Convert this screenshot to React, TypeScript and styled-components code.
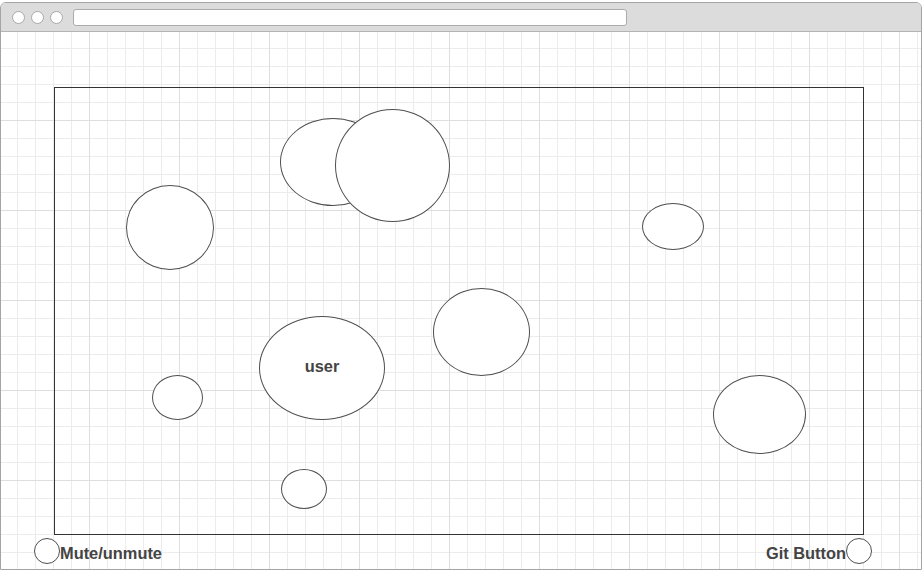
import React from 'react';
import styled, { createGlobalStyle } from 'styled-components';

const GlobalStyle = createGlobalStyle`
  html, body {
    margin: 0;
    padding: 0;
    background: #ffffff;
  }
  body {
    font-family: "Liberation Sans", Arial, sans-serif;
  }
`;

const Window = styled.div`
  box-sizing: border-box;
  margin-top: 2px;
  width: 922px;
  height: 568px;
  border: 1px solid #a4a4a4;
  border-radius: 6px 6px 0 0;
  display: flex;
  flex-direction: column;
  overflow: hidden;
`;

const Chrome = styled.div`
  flex: 0 0 28px;
  display: flex;
  align-items: center;
  padding-left: 11px;
  background: #dcdcdc;
  border-bottom: 1px solid #b4b4b4;
`;

const Dots = styled.div`
  display: flex;
  gap: 6px;
  margin-right: 10px;
`;

const Dot = styled.span`
  box-sizing: border-box;
  width: 13px;
  height: 13px;
  border-radius: 50%;
  background: #ffffff;
  border: 1px solid #a8a8a8;
`;

const AddressBar = styled.div`
  box-sizing: border-box;
  width: 554px;
  height: 17px;
  background: #ffffff;
  border: 1px solid #ababab;
  border-radius: 3px;
`;

const Canvas = styled.div`
  flex: 1;
  padding: 55px 0 0 53px;
  background-color: #ffffff;
  background-image:
    linear-gradient(to right, #dedede 1px, transparent 1px),
    linear-gradient(to bottom, #dedede 1px, transparent 1px),
    linear-gradient(to right, #ececec 1px, transparent 1px),
    linear-gradient(to bottom, #ececec 1px, transparent 1px);
  background-size: 90px 90px, 90px 90px, 18px 18px, 18px 18px;
  background-position: 88px 88px, 88px 88px, 16px 16px, 16px 16px;
`;

const Stage = styled.div`
  position: relative;
  box-sizing: border-box;
  width: 810px;
  height: 448px;
  border: 1px solid #333333;
`;

const Bubble = styled.div`
  position: absolute;
  box-sizing: border-box;
  border: 1px solid #4f4f4f;
  border-radius: 50%;
  background: #ffffff;
  display: flex;
  align-items: center;
  justify-content: center;
`;

const Label = styled.span`
  font-size: 16.4px;
  font-weight: 700;
  color: #444444;
  white-space: nowrap;
`;

const BubbleLabel = styled(Label)`
  margin-bottom: 3px;
`;

const Footer = styled.div`
  display: flex;
  justify-content: space-between;
  align-items: center;
  width: 838px;
  margin: 3px 0 0 -20px;
`;

const Control = styled.div`
  display: flex;
  align-items: center;
`;

const RoundButton = styled.span`
  box-sizing: border-box;
  width: 26px;
  height: 26px;
  border-radius: 50%;
  border: 1px solid #4f4f4f;
  background: #ffffff;
  flex: 0 0 auto;
`;

const ControlLabel = styled(Label)`
  padding-top: 5px;
`;

// positions on the mockup canvas, relative to the stage's inner box
const bubbles = [
  { x: 225, y: 30, w: 106, h: 88 },
  { x: 280, y: 21, w: 115, h: 113 },
  { x: 71, y: 97, w: 88, h: 85 },
  { x: 587, y: 115, w: 62, h: 47 },
  { x: 378, y: 200, w: 97, h: 88 },
  { x: 204, y: 228, w: 126, h: 104, text: 'user' },
  { x: 97, y: 287, w: 51, h: 45 },
  { x: 658, y: 287, w: 93, h: 79 },
  { x: 226, y: 381, w: 46, h: 40 },
];

const App: React.FC = () => {
  return (
    <>
      <GlobalStyle />
      <Window>
        <Chrome>
          <Dots>
            <Dot />
            <Dot />
            <Dot />
          </Dots>
          <AddressBar />
        </Chrome>
        <Canvas>
          <Stage>
            {bubbles.map((b, i) => (
              <Bubble key={i} style={{ left: b.x, top: b.y, width: b.w, height: b.h }}>
                {b.text && <BubbleLabel>{b.text}</BubbleLabel>}
              </Bubble>
            ))}
          </Stage>
          <Footer>
            <Control>
              <RoundButton />
              <ControlLabel>Mute/unmute</ControlLabel>
            </Control>
            <Control>
              <ControlLabel>Git Button</ControlLabel>
              <RoundButton />
            </Control>
          </Footer>
        </Canvas>
      </Window>
    </>
  );
};

export default App;
